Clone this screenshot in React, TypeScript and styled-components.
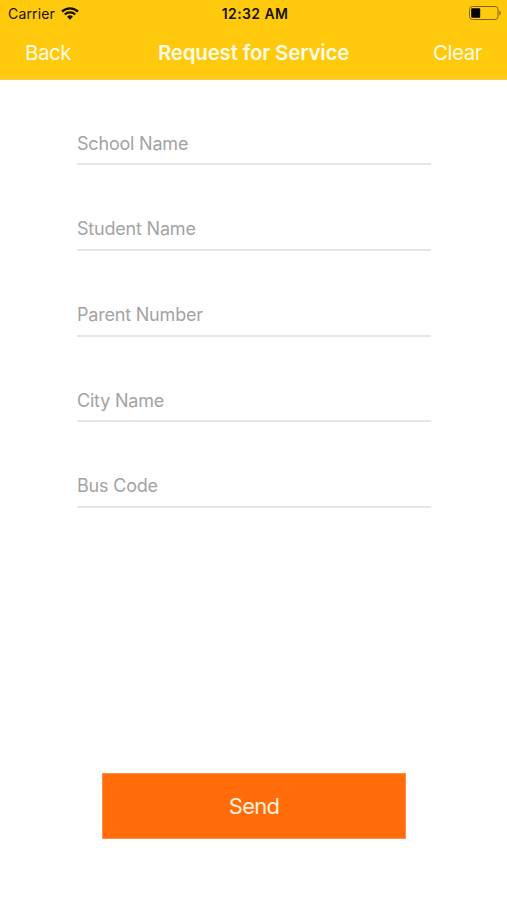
import React from "react";
import styled, { createGlobalStyle } from "styled-components";

const GlobalStyle = createGlobalStyle`
  * { box-sizing: border-box; }
  body { margin: 0; background: #fff; font-family: Inter, "Liberation Sans", sans-serif; }
`;

const Screen = styled.main`
  width: 507px;
  height: 900px;
  display: flex;
  flex-direction: column;
  background: #fff;
`;

const Header = styled.header`
  height: 80px;
  background: #ffc90e;
  border-bottom: 1px solid #ecca64;
`;

const StatusBar = styled.div`
  height: 27px;
  padding: 0 5px 0 8px;
  display: grid;
  grid-template-columns: 1fr auto 1fr;
  align-items: center;
  font-size: 14px;
  color: #171300;
`;

const Carrier = styled.div`
  display: flex;
  align-items: center;
  gap: 6px;
  letter-spacing: 0.15px;
`;

const Clock = styled.time`
  font-weight: 600;
  font-size: 14px;
  letter-spacing: 0.4px;
`;

const Battery = styled.svg`
  justify-self: end;
  margin-top: -1px;
`;

const NavBar = styled.nav`
  height: 50px;
  padding: 0 25px;
  display: grid;
  grid-template-columns: 1fr auto 1fr;
  align-items: center;
`;

const NavButton = styled.button<{ $end?: boolean }>`
  border: 0;
  padding: 0;
  background: none;
  font: 400 20.5px Inter, sans-serif;
  letter-spacing: -0.45px;
  color: #fffbe4;
  text-align: ${(p) => (p.$end ? "right" : "left")};
`;

const Title = styled.h1`
  margin: 0;
  font-size: 20.5px;
  letter-spacing: -0.2px;
  font-weight: 600;
  color: #fffbe4;
`;

const Form = styled.form`
  flex: 1;
  display: flex;
  flex-direction: column;
  padding: 43.4px 76px 61px 77px;
`;

const Field = styled.input`
  height: 42px;
  margin-bottom: 43.6px;
  padding: 0;
  border: 0;
  border-bottom: 2px solid #e6e6e6;
  font: 400 18px Inter, sans-serif;
  letter-spacing: -0.2px;
  outline: 0;
  &::placeholder { color: #a3a3a3; opacity: 1; }
`;

const SendButton = styled.button`
  width: 304px;
  height: 66px;
  margin: auto auto 0 25px;
  border: 1px solid #ff9048;
  background: #ff6c09;
  color: #fff0dc;
  font: 400 22px Inter, sans-serif;
  letter-spacing: -0.75px;
`;

const fields = ["School Name", "Student Name", "Parent Number", "City Name", "Bus Code"];

export default function App() {
  return (
    <Screen>
      <GlobalStyle />
      <Header>
        <StatusBar>
          <Carrier>
            Carrier
            <svg width="18" height="13" viewBox="0 0 18 13" fill="none" stroke="#171300" strokeWidth="2.3">
              <path d="M1 4.7a11.5 11.5 0 0 1 16 0M3.8 7.5a7.5 7.5 0 0 1 10.4 0" />
              <path d="M6.1 9.7a4.2 4.2 0 0 1 5.8 0L9 12.7z" fill="#171300" stroke="none" />
            </svg>
          </Carrier>
          <Clock>12:32 AM</Clock>
          <Battery width="33" height="14" viewBox="0 0 33 14">
            <rect x=".5" y=".5" width="28.5" height="13" rx="3" fill="none" stroke="#80661a" />
            <rect x="2.2" y="2.2" width="9" height="9.6" rx="1" fill="#050400" />
            <path d="M30.3 4.5q3 2.5 0 5z" fill="#80661a" />
          </Battery>
        </StatusBar>
        <NavBar>
          <NavButton>Back</NavButton>
          <Title>Request for Service</Title>
          <NavButton $end>Clear</NavButton>
        </NavBar>
      </Header>
      <Form>
        {fields.map((name) => (
          <Field key={name} placeholder={name} aria-label={name} />
        ))}
        <SendButton type="button">Send</SendButton>
      </Form>
    </Screen>
  );
}
